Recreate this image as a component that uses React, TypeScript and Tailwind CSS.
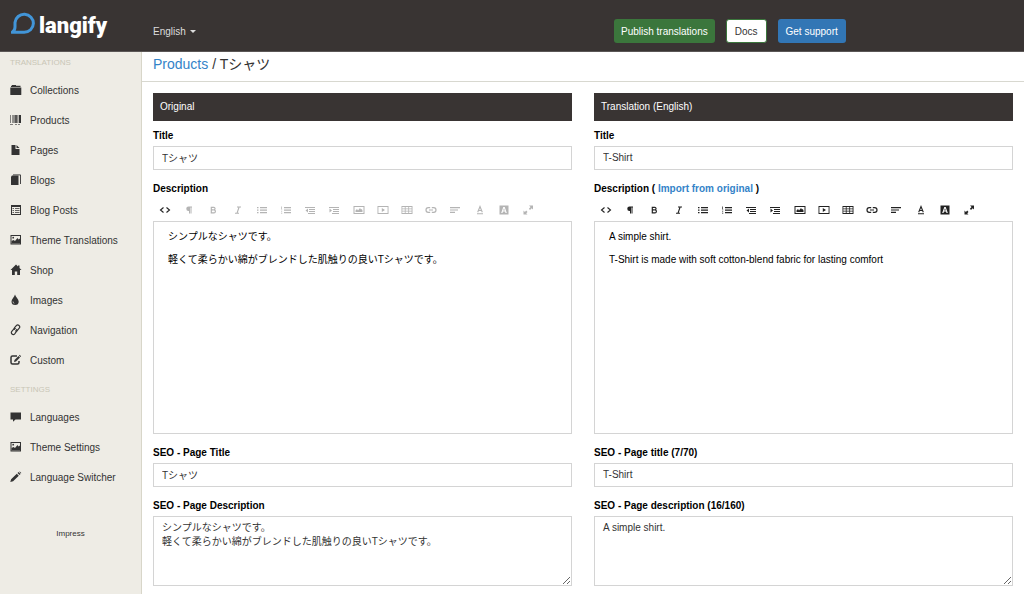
import { useState, type ReactNode } from 'react';

const sideIcons: Record<string, ReactNode> = {
    collections: <path d="M1 1.800h1V1h4v.8h4.500V2.900H1zM.3 3.400h11V10.500a.5.5 0 0 1-.5.500H.8a.5.5 0 0 1-.5-.500z" />,
    barcode: (
        <>
            <path opacity=".6" d="M0 1h1v8H0zM2 1h.8v8H2zM0 10h3v1H0zM5 10h2v1H5zM8 10h2v1H8z" />
            <path d="M3.500 1h1v8h-1zM5.200 1h1.600v8H5.200zM7.500 1h.8v8h-.8zM9 1h2v8H9z" />
        </>
    ),
    page: <path d="M1.500 1h4v4h4v6h-8zM6.500 1l3 3h-3z" />,
    book: (
        <>
            <path d="M1 2.500L2 1.500h6.500V11H1.500a.5.5 0 0 1-.5-.500z" />
            <path d="M3 .9h7.500V10" fill="none" stroke="currentColor" strokeWidth=".9" />
        </>
    ),
    list: (
        <>
            <path d="M1 1h10v10H1zM2 3V10h8V3z" fillRule="evenodd" />
            <path opacity=".75" d="M2.500 4h1.500v1H2.500zM5 4h4.500v1H5zM2.500 6h1.500v1H2.500zM5 6h4.500v1H5zM2.500 8h1.500v1H2.500zM5 8h4.500v1H5z" />
        </>
    ),
    image: (
        <>
            <path fillRule="evenodd" d="M.5 1h10.500v9.500H.5zM1.500 2v7.500H10V2z" />
            <path d="M1.500 9.500V7l2-1 1.500 1 2.500-3 1 1.500L10 4.500v5z" />
            <circle cx="3.200" cy="3.700" r=".9" />
        </>
    ),
    home: <path d="M6 .5L.5 6h1.500v5h2.800V7.500h2.400V11H10V6h1.500L9.500 4V1.500H8v1z" />,
    drop: (
        <>
            <path d="M5 .5C4.500 3 1.500 5 1.500 7.500a3.600 3.600 0 0 0 7.200 0C8.700 5 5.500 3 5 .5z" />
            <path d="M3 7.500c0 1 .5 1.700 1.300 2" fill="none" stroke="#eeece5" strokeWidth=".7" />
        </>
    ),
    chain: (
        <g fill="none" stroke="currentColor" strokeWidth="1.200" strokeLinecap="round">
            <path d="M4.300 5.500a1.800 1.800 0 0 1 .3-1.800l1.700-2a1.900 1.900 0 0 1 2.900 2.500L7.400 6.400a1.800 1.800 0 0 1-1.800.5" />
            <path d="M6.700 5.500a1.800 1.800 0 0 1-.2 2l-1.800 2.300a1.900 1.900 0 0 1-2.900-2.500l1.700-2a1.800 1.800 0 0 1 1.800-.6" />
        </g>
    ),
    edit: (
        <>
            <path d="M7 2H2.500A1.500 1.500 0 0 0 1 3.500v5A1.500 1.500 0 0 0 2.500 10h5A1.500 1.500 0 0 0 9 8.500V7" fill="none" stroke="currentColor" strokeWidth="1.500" />
            <path d="M4 8l.5-2 4-4L10 3.400l-4 4zM9 1.500l.7-.7 1.400 1.400-.7.7z" />
        </>
    ),
    speech: <path d="M.5 1.500h10.500v7H5.500l-2.500 2.300V8.500H.5z" />,
    pencil: <path d="M.3 11l.8-2.800 5.700-5.500 2 2L3.100 10.200zM7.500 2l1-1 2 2-1 1zM9.300.8l.5-.4 1.500 1.500-.5.500z" />,
};

const menu = [
    { label: 'Collections', icon: 'collections' },
    { label: 'Products', icon: 'barcode' },
    { label: 'Pages', icon: 'page' },
    { label: 'Blogs', icon: 'book' },
    { label: 'Blog Posts', icon: 'list' },
    { label: 'Theme Translations', icon: 'image' },
    { label: 'Shop', icon: 'home' },
    { label: 'Images', icon: 'drop' },
    { label: 'Navigation', icon: 'chain' },
    { label: 'Custom', icon: 'edit' },
];

const settings = [
    { label: 'Languages', icon: 'speech' },
    { label: 'Theme Settings', icon: 'image' },
    { label: 'Language Switcher', icon: 'pencil' },
];

const tools: { name: string; icon: ReactNode }[] = [
    { name: 'HTML', icon: <path d="M4.500 3.500L1.500 6l3 2.500M7.500 3.500l3 2.500-3 2.500" fill="none" stroke="currentColor" strokeWidth="1.100" /> },
    { name: 'Formatting', icon: <path d="M5.500 2.500H9v1H8.500v6h-1v-6H7v6H6V7h-.5a2.250 2.250 0 0 1 0-4.500z" /> },
    {
        name: 'Bold',
        icon: <path d="M4.300 3.300h2.200a1.200 1.200 0 0 1 .5 2.500A1.500 1.500 0 0 1 6.700 8.900H4.300zM4.300 5.900h2.500" fill="none" stroke="currentColor" strokeWidth="1.200" />,
    },
    { name: 'Italic', icon: <path d="M5 3h4M3 9.200h4M7.100 3L5 9.200" fill="none" stroke="currentColor" strokeWidth="1.100" /> },
    { name: 'Unordered List', icon: <path d="M1 3h1.500v1.200H1zM4 3h7v1.200H4zM1 5.500h1.500v1.200H1zM4 5.500h7v1.200H4zM1 8h1.500v1.200H1zM4 8h7v1.200H4z" /> },
    { name: 'Ordered List', icon: <path d="M1.300 2.500h.7V5h-.7zM4 3h7v1.200H4zM1.200 5.500h1v.8h-1zM4 5.500h7v1.200H4zM1 7.500h1.200v.7H1zM1.300 9H2.200v.7h-.9zM4 8h7v1.200H4z" /> },
    { name: 'Outdent', icon: <path d="M1 3h10v1H1zM5 5h6v1H5zM5 7h6v1H5zM4 9h7v1H4zM4 4.500v4L1.500 6.500z" /> },
    { name: 'Indent', icon: <path d="M1 3h10v1H1zM5 5h6v1H5zM5 7h6v1H5zM4 9h7v1H4zM1.500 4.500v4L4 6.500z" /> },
    { name: 'Image', icon: <path fillRule="evenodd" d="M.5 2h11v8H.5zM1.500 3v6h9V3zM2.500 8V6.500l1.500-1.500 1 1.500L7 4l1 1.500.8-.5.7 1.500V8z" /> },
    { name: 'Video', icon: <path fillRule="evenodd" d="M.5 2h11v8H.5zM1.400 2.900v6.200h9.200V2.900zM4.800 4l3.200 2-3.200 2z" /> },
    {
        name: 'Table',
        icon: (
            <path
                fillRule="evenodd"
                d="M.5 2h11v8H.5zM1.300 3v1.500h2.500V3zM4.600 3v1.500h2.700V3zM8.100 3v1.500h2.500V3zM1.300 5.300v1.400h2.500V5.300zM4.600 5.300v1.400h2.700V5.300zM8.100 5.300v1.400h2.500V5.300zM1.300 7.500v1.600h2.500V7.500zM4.600 7.500v1.600h2.700V7.500zM8.100 7.500v1.600h2.500V7.500z"
            />
        ),
    },
    {
        name: 'Link',
        icon: <path d="M5.200 3.700h-1.900a2.300 2.300 0 0 0 0 4.600h1.900M6.800 3.700h1.900a2.300 2.300 0 0 1 0 4.600h-1.900M4 6h4" fill="none" stroke="currentColor" strokeWidth="1.200" />,
    },
    { name: 'Align', icon: <path d="M1 3h10v1.200H1zM1 5.400h8v1.200H1zM1 7.800h5V9H1z" /> },
    {
        name: 'Font Color',
        icon: <path d="M3.700 8.200L6 2.500l2.300 5.700M4.500 6.500h3M3 9.700h6" fill="none" stroke="currentColor" strokeWidth="1.100" />,
    },
    { name: 'Back Color', icon: <path fillRule="evenodd" d="M1.500 1.500h9v9h-9zM5.300 3L3.200 9h1.300l.4-1.400h2.200L7.500 9h1.300L6.700 3zM6 4.300l.8 2.300H5.200z" /> },
    {
        name: 'Fullscreen',
        icon: <path d="M7 1.500h4v4L9.700 4.200 8 5.900l-1.100-1.100 1.700-1.700zM1.500 6.500v4h4L4.200 9.200l1.300-1.300-1.300-1.300-1.300 1.300z" />,
    },
];

function MenuList({ title, items }: { title: string; items: { label: string; icon: string }[] }) {
    return (
        <div className="mb-1">
            <h2 className="mb-[2px] pt-px text-[8px] leading-5 text-[#c9c6b6] uppercase">{title}</h2>
            <ul>
                {items.map((item) => (
                    <li key={item.label}>
                        <a href="#" className="flex h-[30px] items-center gap-2">
                            <svg viewBox="0 0 12 12" className="size-3 shrink-0" fill="currentColor">
                                {sideIcons[item.icon]}
                            </svg>
                            {item.label}
                        </a>
                    </li>
                ))}
            </ul>
        </div>
    );
}

function Toolbar({ disabled }: { disabled?: boolean }) {
    return (
        <div className="grid h-[25px] w-[387px] max-w-full grid-cols-16 items-center pt-[2px]">
            {tools.map((tool, i) => (
                <button
                    key={tool.name}
                    type="button"
                    aria-label={tool.name}
                    disabled={disabled && i > 0}
                    className="flex justify-center text-[#222] disabled:text-[#b4b4b4]"
                >
                    <svg viewBox="0 0 12 12" className="size-3" fill="currentColor">
                        {tool.icon}
                    </svg>
                </button>
            ))}
        </div>
    );
}

type PanelProps = {
    id: string;
    heading: string;
    title: string;
    body: string[];
    seoTitleLabel: string;
    seoDescriptionLabel: string;
    seoDescription: string;
    original?: boolean;
};

function Panel({ id, heading, title, body, seoTitleLabel, seoDescriptionLabel, seoDescription, original }: PanelProps) {
    const [name, setName] = useState(title);
    const [seoTitle, setSeoTitle] = useState(title);
    const [seoText, setSeoText] = useState(seoDescription);

    const label = 'block font-bold leading-[15px] text-black';
    const input = 'mt-[3px] block h-6 w-full border border-[#d4d4d4] bg-white px-2 pb-[2px] text-[#333] outline-none';

    return (
        <section>
            <h2 className="mb-[7px] bg-[#393433] px-[7px] leading-7 text-white">{heading}</h2>
            <div className="flex flex-col gap-[11px]">
                <div>
                    <label htmlFor={id + '-title'} className={label}>Title</label>
                    <input id={id + '-title'} className={input} value={name} onChange={(e) => setName(e.target.value)} />
                </div>
                <div>
                    <div id={id + '-description'} className={label}>
                        {original ? 'Description' : (
                            <>Description ( <a href="#" className="text-[#3383c8]">Import from original</a> )</>
                        )}
                    </div>
                    <Toolbar disabled={original} />
                    <div
                        role="textbox"
                        aria-multiline="true"
                        aria-labelledby={id + '-description'}
                        contentEditable={!original}
                        suppressContentEditableWarning
                        className="flex min-h-[213px] flex-col gap-2 border border-[#d4d4d4] px-[14px] py-[7px] leading-[15px] text-black outline-none"
                    >
                        {body.map((line) => <p key={line}>{line}</p>)}
                    </div>
                </div>
                <div>
                    <label htmlFor={id + '-seo-title'} className={label}>{seoTitleLabel}</label>
                    <input id={id + '-seo-title'} className={input} value={seoTitle} onChange={(e) => setSeoTitle(e.target.value)} />
                </div>
                <div>
                    <label htmlFor={id + '-seo-text'} className={label}>{seoDescriptionLabel}</label>
                    <textarea
                        id={id + '-seo-text'}
                        className="mt-[3px] block h-[70px] w-full resize border border-[#d4d4d4] bg-white px-2 py-1 leading-[14px] text-[#333] outline-none"
                        value={seoText}
                        onChange={(e) => setSeoText(e.target.value)}
                    />
                </div>
            </div>
        </section>
    );
}

export default function App() {
    return (
        <div className="flex min-h-screen flex-col bg-white font-['Liberation_Sans','Noto_Sans_CJK_JP',sans-serif] text-[10px] text-[#333]">
            <header className="flex border-b border-[#5b5756] bg-[#393433]">
                <a href="#" className="flex w-[142px] shrink-0 items-start gap-1 pt-[11px] pl-[11px] text-white">
                    <svg viewBox="0 0 24 24" className="size-6" fill="none" stroke="#4295d8" strokeWidth="3">
                        <path d="M1 21.300C3.200 20.300 4 18.800 4 16V11.500A9.200 9 0 1 1 13.200 21.300z" strokeLinejoin="round" />
                    </svg>
                    <span className="font-[Roboto,sans-serif] text-[22px] leading-[30px] font-black">langify</span>
                </a>
                <div className="grid flex-1 grid-cols-2 gap-[22px] px-[11px] pt-[19px] pb-2">
                    <div className="flex h-6 items-center gap-1 text-[#ddd]">
                        <select aria-label="Language" className="appearance-none bg-transparent outline-none">
                            <option>English</option>
                        </select>
                        <svg viewBox="0 0 6 3" className="pointer-events-none h-[3px] w-[6px]" fill="currentColor">
                            <path d="M0 0h6L3 3z" />
                        </svg>
                    </div>
                    <div className="flex h-6 gap-[11px] pl-5 whitespace-nowrap">
                        <button type="button" className="rounded-[3px] bg-[#3b763c] px-[7px] text-white">Publish translations</button>
                        <button type="button" className="rounded-[3px] border border-[#3b763c] bg-white px-2 text-[#333]">Docs</button>
                        <button type="button" className="rounded-[3px] bg-[#3276b5] px-2 text-white">Get support</button>
                    </div>
                </div>
            </header>

            <div className="flex flex-1">
                <nav className="w-[142px] shrink-0 border-r border-[#d8d6c9] bg-[#eeece5] pl-[10px]">
                    <MenuList title="Translations" items={menu} />
                    <MenuList title="Settings" items={settings} />
                    <p className="mt-[34px] pr-[10px] text-center text-[8px] leading-4">
                        <a href="#">Impress</a>
                    </p>
                </nav>

                <main className="min-w-0 flex-1">
                    <h1 className="border-b border-[#d8d8d0] px-[11px] pb-[5px] text-sm leading-6">
                        <a href="#" className="text-[#3383c8]">Products</a> / Tシャツ
                    </h1>
                    <div className="grid grid-cols-2 gap-[22px] px-[11px] pt-[11px] pb-2">
                        <Panel
                            id="original"
                            original
                            heading="Original"
                            title="Tシャツ"
                            body={['シンプルなシャツです。', '軽くて柔らかい綿がブレンドした肌触りの良いTシャツです。']}
                            seoTitleLabel="SEO - Page Title"
                            seoDescriptionLabel="SEO - Page Description"
                            seoDescription={'シンプルなシャツです。\n軽くて柔らかい綿がブレンドした肌触りの良いTシャツです。'}
                        />
                        <Panel
                            id="translation"
                            heading="Translation (English)"
                            title="T-Shirt"
                            body={['A simple shirt.', 'T-Shirt is made with soft cotton-blend fabric for lasting comfort']}
                            seoTitleLabel="SEO - Page title (7/70)"
                            seoDescriptionLabel="SEO - Page description (16/160)"
                            seoDescription="A simple shirt."
                        />
                    </div>
                </main>
            </div>
        </div>
    );
}
